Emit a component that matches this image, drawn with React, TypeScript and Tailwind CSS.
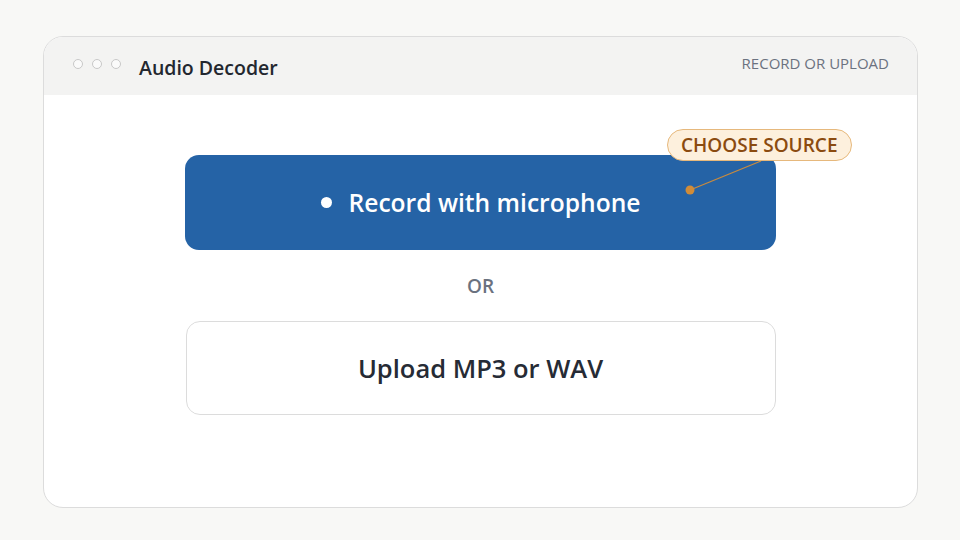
import React from 'react';

const App: React.FC = () => {
  return (
    <div
      className="w-[960px] h-[540px] bg-[#f8f8f6] pt-[36px] pl-[43px]"
      style={{ fontFamily: '"Open Sans", "Noto Sans", sans-serif' }}
    >
      <div className="w-[875px] h-[472px] rounded-[20px] border border-[#dcdcdc] bg-white overflow-hidden flex flex-col">
        {/* Title bar */}
        <div className="h-[58px] bg-[#f3f3f2] flex items-center pl-[29px] pr-[28px] shrink-0">
          <div className="flex items-center gap-[9px] mt-[-4px]">
            <span className="w-[10px] h-[10px] rounded-full border border-[#c8c8c8] bg-[#fafafa]" />
            <span className="w-[10px] h-[10px] rounded-full border border-[#c8c8c8] bg-[#fafafa]" />
            <span className="w-[10px] h-[10px] rounded-full border border-[#c8c8c8] bg-[#fafafa]" />
          </div>
          <h1 className="ml-[18px] mt-[4px] text-[19.5px] leading-[24px] font-semibold text-[#23272f]">Audio Decoder</h1>
          <span className="ml-auto mt-[-6px] text-[15px] leading-[20px] font-medium text-[#6b7280]">RECORD OR UPLOAD</span>
        </div>

        {/* Body */}
        <div className="flex-1 flex flex-col items-center pt-[60px]">
          <div className="relative">
            <button className="w-[591px] h-[95px] rounded-[14px] bg-[#2563a6] text-white text-[24.6px] leading-[32px] font-semibold flex items-center justify-center gap-[17px]">
              <span className="w-[11px] h-[11px] rounded-full bg-white" />
              <span className="mt-[1px]">Record with microphone</span>
            </button>

            {/* Annotation */}
            <svg className="absolute left-[500px] top-[4px] pointer-events-none" width="90" height="40">
              <line x1="5" y1="31" x2="76" y2="2" stroke="#c98b3e" strokeWidth="1.3" />
              <circle cx="5" cy="31" r="4.5" fill="#d18c38" />
            </svg>
            <div className="absolute left-[482px] top-[-26px] h-[32px] px-[13px] rounded-full border border-[#e6b87c] bg-[#fdf0dd] flex items-center text-[19px] leading-[24px] font-semibold text-[#8b4b10] whitespace-nowrap">
              CHOOSE SOURCE
            </div>
          </div>

          <div className="mt-[24px] text-[19px] leading-[24px] font-semibold text-[#6b7280]">OR</div>

          <button className="mt-[23px] w-[590px] h-[94px] rounded-[14px] border-[1.5px] border-[#dcdcdc] bg-white text-[25.5px] leading-[32px] font-semibold text-[#262b35] flex items-center justify-center">
            Upload MP3 or WAV
          </button>
        </div>
      </div>
    </div>
  );
};

export default App;
